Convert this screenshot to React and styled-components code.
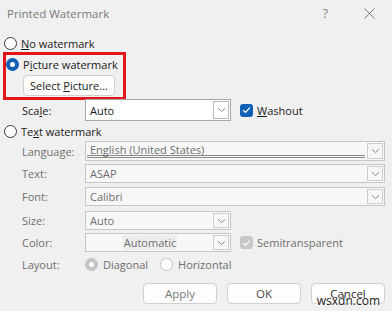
import React from 'react';
import styled, { createGlobalStyle } from 'styled-components';

const GlobalStyle = createGlobalStyle`
    html, body {
        margin: 0;
        padding: 0;
        background: #f0f0f0;
    }
    body {
        font-family: "Open Sans", "Noto Sans", "Liberation Sans", sans-serif;
        font-size: 11px;
        color: #1a1a1a;
    }
`;

const Dialog = styled.div`
    position: relative;
    width: 392px;
    height: 311px;
    background: #f0f0f0;
    overflow: hidden;
    box-sizing: border-box;
    white-space: nowrap;
`;

const TitleBar = styled.div`
    height: 26px;
    display: flex;
    align-items: center;
    padding-left: 7px;
    padding-right: 17px;
    color: #7a7a7a;
    font-size: 11.5px;
`;

const TitleText = styled.div`
    flex: 1;
`;

const Help = styled.div`
    color: #8a8a8a;
    font-size: 13px;
    margin-right: 36px;
`;

const Body = styled.div`
    padding-left: 4px;
    display: flex;
    flex-direction: column;
`;

const RadioRow = styled.div`
    display: flex;
    align-items: center;
    gap: 4px;
    height: 14px;
    margin-top: ${p => p.$top || 0}px;
    color: ${p => (p.$disabled ? '#6f6f6f' : '#1a1a1a')};
`;

const RadioDot = styled.span`
    width: 13px;
    height: 13px;
    box-sizing: border-box;
    border-radius: 50%;
    display: inline-flex;
    align-items: center;
    justify-content: center;
    flex-shrink: 0;
    background: ${p => (p.$checked ? (p.$disabled ? '#c4c4c4' : '#1160b7') : '#ffffff')};
    border: 1px solid ${p => (p.$checked ? 'transparent' : p.$disabled ? '#c4c4c4' : '#3a3a3a')};
    &::after {
        content: '';
        display: ${p => (p.$checked ? 'block' : 'none')};
        width: 5px;
        height: 5px;
        border-radius: 50%;
        background: #ffffff;
    }
`;

const Highlight = styled.div`
    margin-left: -1px;
    margin-top: 2px;
    width: 123px;
    height: 48px;
    box-sizing: border-box;
    border: 3px solid #e3151c;
    display: flex;
    flex-direction: column;
    padding-left: 0;
    padding-top: 2px;
`;

const PushButton = styled.button`
    font-family: inherit;
    font-size: ${p => p.$size || 11.5}px;
    color: ${p => p.$color || '#1a1a1a'};
    width: ${p => p.$width}px;
    height: ${p => p.$height || 21}px;
    margin-left: ${p => p.$left || 0}px;
    margin-top: ${p => p.$top || 0}px;
    background: #fdfdfd;
    border: 1px solid #d0d0d0;
    border-radius: 4px;
    padding: 0;
    white-space: nowrap;
`;

const Row = styled.div`
    display: flex;
    align-items: center;
    padding-left: 18px;
    height: ${p => p.$height || 19}px;
    margin-top: ${p => p.$top || 0}px;
`;

const Label = styled.div`
    width: 63px;
    flex-shrink: 0;
    color: ${p => (p.$disabled ? '#6f6f6f' : '#1a1a1a')};
`;

const SelectBox = styled.div`
    width: ${p => p.$width}px;
    height: 100%;
    box-sizing: border-box;
    border: 1px solid ${p => (p.$disabled ? '#c6c6c6' : '#a8a8a8')};
    background: ${p => (p.$disabled ? '#f7f7f7' : '#ffffff')};
    display: flex;
    align-items: stretch;
    padding: 1px;
`;

const SelectValue = styled.div`
    flex: 1;
    display: flex;
    align-items: center;
    justify-content: ${p => (p.$center ? 'center' : 'flex-start')};
    padding-left: ${p => (p.$center ? 0 : 3)}px;
    color: ${p => (p.$disabled ? '#6f6f6f' : '#1a1a1a')};
    border-bottom: ${p => (p.$underline ? '3px double #8a8a8a' : 'none')};
    margin-bottom: ${p => (p.$underline ? 1 : 0)}px;
    margin-right: ${p => (p.$underline ? 2 : 0)}px;
`;

const Selected = styled.span`
    background: #ededed;
    padding: 0 1px;
`;

const ArrowBox = styled.div`
    width: 16px;
    box-sizing: border-box;
    border: 1px solid ${p => (p.$disabled ? '#cfcfcf' : '#b8b8b8')};
    background: ${p => (p.$disabled ? '#f7f7f7' : '#ffffff')};
    display: flex;
    align-items: center;
    justify-content: center;
`;

const CheckWrap = styled.div`
    display: flex;
    align-items: center;
    gap: 4px;
    margin-left: 9px;
    color: ${p => (p.$disabled ? '#6f6f6f' : '#1a1a1a')};
`;

const CheckBox = styled.span`
    width: 13px;
    height: 13px;
    border-radius: 3px;
    background: ${p => (p.$disabled ? '#c8c8c8' : '#1160b7')};
    display: inline-flex;
    align-items: center;
    justify-content: center;
`;

const LayoutOption = styled.div`
    display: flex;
    align-items: center;
    gap: 5px;
    margin-right: 12px;
    color: #6f6f6f;
`;

const Footer = styled.div`
    display: flex;
    justify-content: flex-end;
    gap: 10px;
    padding-right: 7px;
    margin-top: 10px;
`;

const Stamp = styled.div`
    position: absolute;
    right: 12px;
    bottom: 2px;
    font-size: 12px;
    color: #222;
    text-shadow: 0 0 2px #fff, 0 0 2px #fff;
    pointer-events: none;
`;

const Chevron = () => (
    <svg width="9" height="6" viewBox="0 0 9 6">
        <path d="M1 1.2 L4.5 4.6 L8 1.2" fill="none" stroke="#7a7a7a" strokeWidth="0.9" />
    </svg>
);

const Tick = () => (
    <svg width="9" height="8" viewBox="0 0 9 8">
        <path d="M1.2 4.2 L3.5 6.3 L7.8 1.6" fill="none" stroke="#ffffff" strokeWidth="1.2" />
    </svg>
);

const Select = ({ width, value, disabled, underline, center, selected }) => (
    <SelectBox $width={width} $disabled={disabled}>
        <SelectValue $disabled={disabled} $underline={underline} $center={center}>
            {selected ? <Selected>{value}</Selected> : value}
        </SelectValue>
        <ArrowBox $disabled={disabled}>
            <Chevron />
        </ArrowBox>
    </SelectBox>
);

export default function App() {
    return (
        <Dialog>
            <GlobalStyle />
            <TitleBar>
                <TitleText>Printed Watermark</TitleText>
                <Help>?</Help>
                <svg width="11" height="11" viewBox="0 0 11 11">
                    <path d="M0.5 0.5 L10.5 10.5 M10.5 0.5 L0.5 10.5" stroke="#6a6a6a" strokeWidth="0.9" />
                </svg>
            </TitleBar>
            <Body>
                <RadioRow $top={10}>
                    <RadioDot />
                    <span><u>N</u>o watermark</span>
                </RadioRow>
                <Highlight>
                    <RadioRow>
                        <RadioDot $checked />
                        <span>P<u>i</u>cture watermark</span>
                    </RadioRow>
                    <PushButton $width={92} $height={21} $left={17} $top={4} $size={11}>
                        Select <u>P</u>icture...
                    </PushButton>
                </Highlight>
                <Row $height={22} $top={-1}>
                    <Label>Sca<u>l</u>e:</Label>
                    <Select width={146} value="Auto" />
                    <CheckWrap>
                        <CheckBox><Tick /></CheckBox>
                        <span><u>W</u>ashout</span>
                    </CheckWrap>
                </Row>
                <RadioRow $top={3}>
                    <RadioDot />
                    <span>Te<u>x</u>t watermark</span>
                </RadioRow>
                <Row $top={3} $height={20}>
                    <Label $disabled>Language:</Label>
                    <Select width={300} value="English (United States)" disabled underline />
                </Row>
                <Row $top={3}>
                    <Label $disabled>Text:</Label>
                    <Select width={300} value="ASAP" disabled />
                </Row>
                <Row $top={4}>
                    <Label $disabled>Font:</Label>
                    <Select width={300} value="Calibri" disabled />
                </Row>
                <Row $top={5}>
                    <Label $disabled>Size:</Label>
                    <Select width={146} value="Auto" disabled />
                </Row>
                <Row $top={3}>
                    <Label $disabled>Color:</Label>
                    <Select width={146} value="Automatic" disabled center selected />
                    <CheckWrap $disabled>
                        <CheckBox $disabled><Tick /></CheckBox>
                        <span>Semitransparent</span>
                    </CheckWrap>
                </Row>
                <Row $top={3} $height={18}>
                    <Label $disabled>Layout:</Label>
                    <LayoutOption>
                        <RadioDot $checked $disabled />
                        <span>Diagonal</span>
                    </LayoutOption>
                    <LayoutOption>
                        <RadioDot $disabled />
                        <span>Horizontal</span>
                    </LayoutOption>
                </Row>
            </Body>
            <Footer>
                <PushButton $width={74} $color="#7a7a7a">Apply</PushButton>
                <PushButton $width={74} $color="#4a4a4a">OK</PushButton>
                <PushButton $width={74} $color="#2a2a2a">Cancel</PushButton>
            </Footer>
            <Stamp>wsxdn.com</Stamp>
        </Dialog>
    );
}
